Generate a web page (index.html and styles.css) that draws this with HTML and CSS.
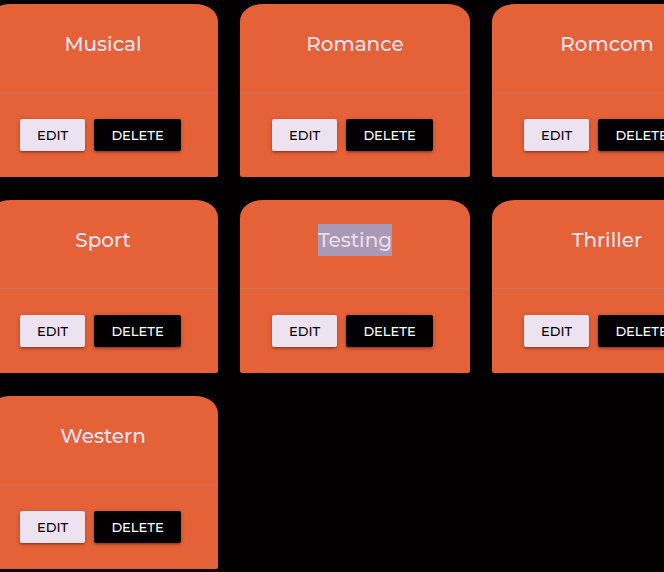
FILE: index.html
```html
<!DOCTYPE html>
<html lang="en">
<head>
<meta charset="utf-8">
<meta name="viewport" content="width=device-width, initial-scale=1">
<title>Genres</title>
<link rel="stylesheet" href="styles.css">
</head>
<body>
<main class="genres">
  <article class="card">
    <h2 class="card-title">Musical</h2>
    <div class="card-action"><button type="button" class="btn btn-edit">EDIT</button><button type="button" class="btn btn-delete">DELETE</button></div>
  </article>
  <article class="card">
    <h2 class="card-title">Romance</h2>
    <div class="card-action"><button type="button" class="btn btn-edit">EDIT</button><button type="button" class="btn btn-delete">DELETE</button></div>
  </article>
  <article class="card">
    <h2 class="card-title">Romcom</h2>
    <div class="card-action"><button type="button" class="btn btn-edit">EDIT</button><button type="button" class="btn btn-delete">DELETE</button></div>
  </article>
  <article class="card">
    <h2 class="card-title">Sport</h2>
    <div class="card-action"><button type="button" class="btn btn-edit">EDIT</button><button type="button" class="btn btn-delete">DELETE</button></div>
  </article>
  <article class="card">
    <h2 class="card-title"><span class="selected">Testing</span></h2>
    <div class="card-action"><button type="button" class="btn btn-edit">EDIT</button><button type="button" class="btn btn-delete">DELETE</button></div>
  </article>
  <article class="card">
    <h2 class="card-title">Thriller</h2>
    <div class="card-action"><button type="button" class="btn btn-edit">EDIT</button><button type="button" class="btn btn-delete">DELETE</button></div>
  </article>
  <article class="card">
    <h2 class="card-title">Western</h2>
    <div class="card-action"><button type="button" class="btn btn-edit">EDIT</button><button type="button" class="btn btn-delete">DELETE</button></div>
  </article>
</main>
</body>
</html>
```
FILE: styles.css
```css
* {
  box-sizing: border-box;
}

body {
  margin: 0;
  background: #030001;
  font-family: Montserrat, Inter, "Open Sans", sans-serif;
  overflow: hidden;
}

/* The row of cards runs past both sides of the window */
.genres {
  display: grid;
  grid-template-columns: repeat(3, 230px);
  gap: 23px 22px;
  margin-left: -12px;
  padding: 4px 0;
}

.card {
  background: #e56137;
  border-radius: 10% 10% 2px 2px;
  overflow: hidden;
}

.card-title {
  display: flex;
  justify-content: center;
  margin: 0;
  padding: 24px 24px 32px;
  color: #ede2ef;
  font-size: 20px;
  font-weight: 500;
  line-height: 32px;
}

.selected {
  background: #a899b7;
  color: #eddcea;
}

.card-action {
  display: flex;
  gap: 9px;
  padding: 26px 32px;
  border-top: 1px solid #d27055;
}

.btn {
  height: 32px;
  padding: 0;
  border: 0;
  border-radius: 2px;
  box-shadow: 0 2px 2px rgba(0, 0, 0, 0.14), 0 3px 1px -2px rgba(0, 0, 0, 0.12), 0 1px 5px rgba(0, 0, 0, 0.2);
  font-family: inherit;
  font-size: 13px;
  font-weight: 500;
  line-height: 32px;
  text-align: center;
}

.btn-edit {
  min-width: 65px;
  background: #ede2ef;
  color: #030001;
}

.btn-delete {
  min-width: 87px;
  background: #030001;
  color: #fff;
}
```
